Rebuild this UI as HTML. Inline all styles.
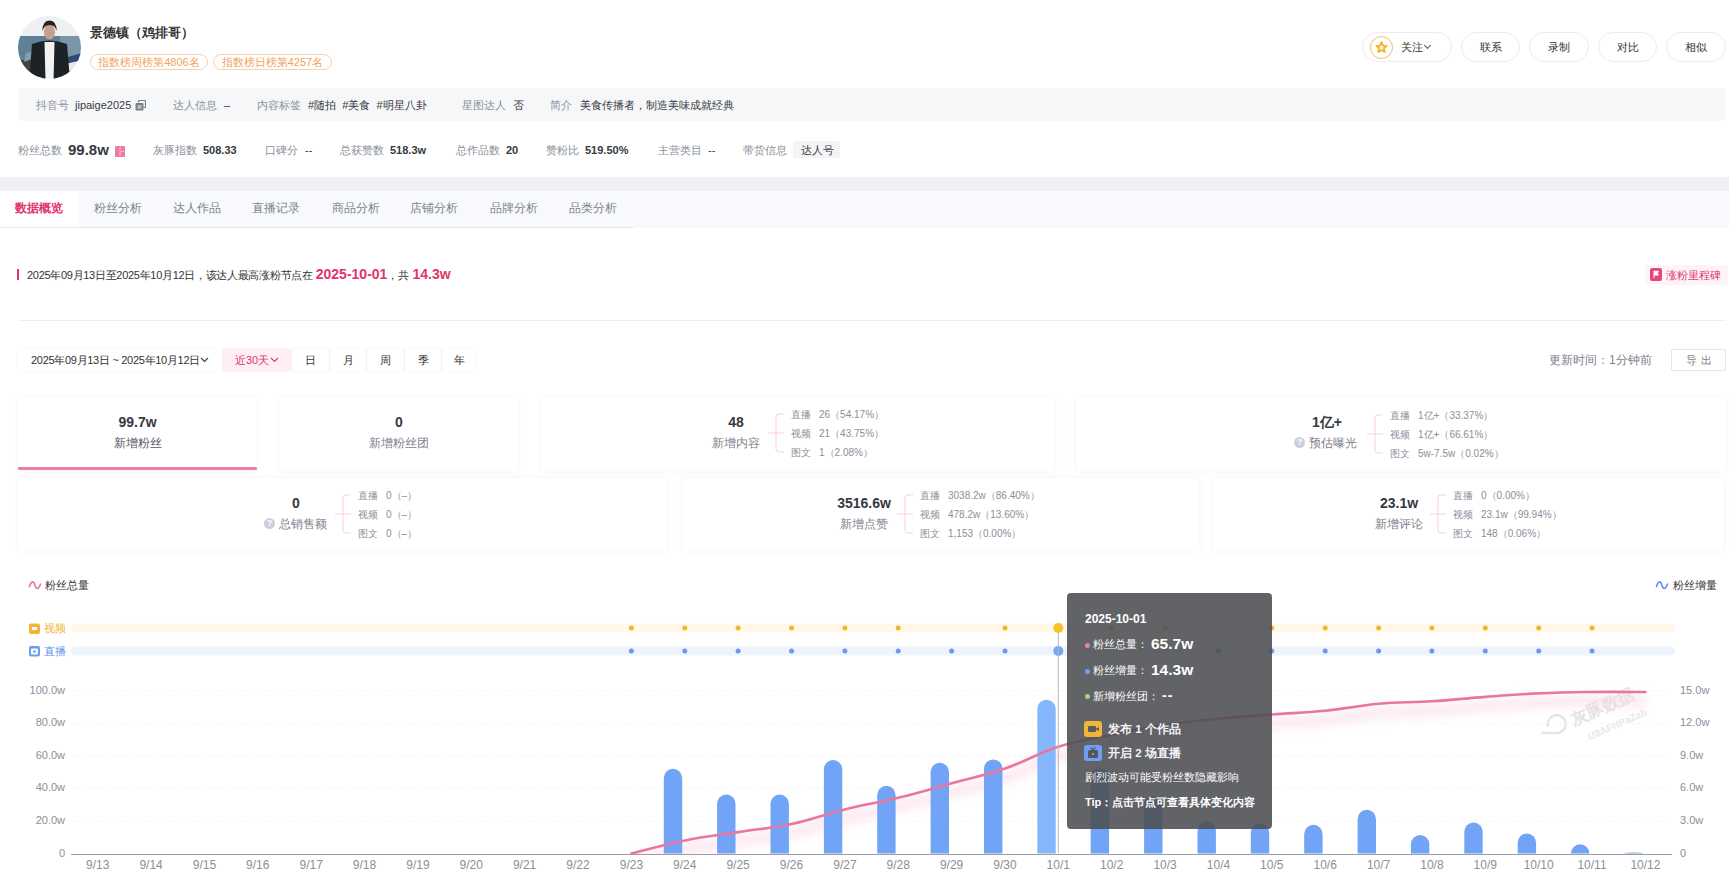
<!DOCTYPE html>
<html><head><meta charset="utf-8">
<style>
*{box-sizing:border-box;margin:0;padding:0}
html,body{width:1729px;height:881px;overflow:hidden;background:#fff}
body{font-family:"Liberation Sans",sans-serif;color:#333;font-size:11px;position:relative}
.a{position:absolute;white-space:nowrap}
.lbl{color:#8a8f99}
.val{color:#363940}
.btn{position:absolute;top:32px;height:30px;border:1px solid #ececec;border-radius:15px;font-size:11px;color:#333;text-align:center;line-height:28px;background:#fff}
.badge{position:absolute;top:54px;height:16px;border:1px solid #f5d3b0;border-radius:8px;color:#f0a35e;font-size:11px;line-height:14px;text-align:center}
.tab{position:absolute;top:200px;font-size:12px;color:#7d828c;line-height:16px}
.card{position:absolute;background:#fff;border-radius:4px;box-shadow:0 0 6px rgba(0,0,0,0.05)}
.big{position:absolute;font-size:14px;font-weight:bold;color:#363940;text-align:center;line-height:16px}
.sub{position:absolute;font-size:12px;color:#7d828c;text-align:center;line-height:16px}
.br{position:absolute;font-size:10px;color:#8a8f99;line-height:12px}
.seg{position:absolute;top:349px;height:22px;line-height:22px;font-size:11px;color:#333;text-align:center}
</style></head><body>

<!-- header -->
<svg class="a" style="left:18px;top:16px" width="63" height="63" viewBox="0 0 63 63">
<defs><clipPath id="av"><circle cx="31.5" cy="31.5" r="31.5"/></clipPath><filter id="avb"><feGaussianBlur stdDeviation="0.7"/></filter></defs>
<g clip-path="url(#av)"><g filter="url(#avb)">
<rect x="-2" y="-2" width="67" height="67" fill="#eef0f2"/>
<rect x="-2" y="20" width="67" height="26" fill="#5f8196"/>
<rect x="42" y="20" width="23" height="22" fill="#7896a8"/>
<rect x="-2" y="44" width="67" height="21" fill="#46403f"/>
<path d="M8 37 L22 33 L22 40 L6 46 Z" fill="#7fa0b3"/>
<path d="M46 45 L64 40 L64 65 L46 65 Z" fill="#b8525e"/>
<path d="M50 47 L64 44 L64 52 L51 55 Z" fill="#e9e9ec"/>
<path d="M46 42 L64 37 L64 44 L47 48 Z" fill="#2f4c78"/>
<path d="M11 65 L14 28 Q31 21 49 28 L52 65 Z" fill="#1e2326"/>
<path d="M26.5 26 L36.5 26 L35.5 65 L27.5 65 Z" fill="#f3f3f3"/>
<ellipse cx="31.5" cy="16" rx="5.6" ry="7.5" fill="#c6a08e"/>
<path d="M24.5 15 Q24 5 31.5 4.5 Q39 5 38.5 15 Q37.5 9 31.5 9 Q26 9 24.5 15 Z" fill="#2b211f"/>
</g></g></svg>
<div class="a" style="left:90px;top:25px;font-size:13px;font-weight:bold;color:#333;line-height:16px">景德镇（鸡排哥）</div>
<div class="badge" style="left:90px;width:118px">指数榜周榜第4806名</div>
<div class="badge" style="left:213px;width:119px">指数榜日榜第4257名</div>

<div class="btn" style="left:1362px;width:90px;text-align:left;padding-left:38px">关注<span style="display:inline-block;margin-left:2px;width:5px;height:5px;border-right:1px solid #555;border-bottom:1px solid #555;transform:rotate(45deg);position:relative;top:-3px"></span></div>
<div class="a" style="left:1370px;top:36px;width:23px;height:23px;border:1.6px solid #efc24a;border-radius:50%"></div>
<svg class="a" style="left:1374px;top:40px" width="15" height="15" viewBox="0 0 15 15"><path d="M7.5 2.2 L9 5.6 L12.6 5.9 L9.9 8.3 L10.7 11.9 L7.5 10 L4.3 11.9 L5.1 8.3 L2.4 5.9 L6 5.6 Z" fill="#fff6dc" stroke="#f0b62a" stroke-width="1.9" stroke-linejoin="round"/></svg>
<div class="btn" style="left:1461px;width:59px">联系</div>
<div class="btn" style="left:1529px;width:60px">录制</div>
<div class="btn" style="left:1598px;width:59px">对比</div>
<div class="btn" style="left:1666px;width:60px">相似</div>

<!-- info bar -->
<div class="a" style="left:18px;top:88px;width:1708px;height:33px;background:#f6f7f9;border-radius:4px"></div>
<div class="a lbl" style="left:36px;top:98px;line-height:14px">抖音号</div>
<div class="a val" style="left:75px;top:98px;line-height:14px">jipaige2025</div>
<svg class="a" style="left:135px;top:100px" width="11" height="11" viewBox="0 0 11 11"><path d="M3.5 2.5 V1.5 Q3.5 0.5 4.5 0.5 H9.5 Q10.5 0.5 10.5 1.5 V6.5 Q10.5 7.5 9.5 7.5 H8.5" fill="none" stroke="#7b7e86" stroke-width="1.2"/><rect x="0.5" y="3" width="8" height="7.5" rx="1" fill="#7b7e86"/><rect x="2.5" y="5.5" width="4" height="0.9" fill="#fff"/><rect x="2.5" y="7.5" width="4" height="0.9" fill="#fff"/></svg>
<div class="a lbl" style="left:173px;top:98px;line-height:14px">达人信息</div>
<div class="a val" style="left:224px;top:98px;line-height:14px">–</div>
<div class="a lbl" style="left:257px;top:98px;line-height:14px">内容标签</div>
<div class="a val" style="left:308px;top:98px;line-height:14px">#随拍 &nbsp;#美食 &nbsp;#明星八卦</div>
<div class="a lbl" style="left:462px;top:98px;line-height:14px">星图达人</div>
<div class="a val" style="left:513px;top:98px;line-height:14px">否</div>
<div class="a lbl" style="left:550px;top:98px;line-height:14px">简介</div>
<div class="a val" style="left:580px;top:98px;line-height:14px">美食传播者，制造美味成就经典</div>

<!-- stats -->
<div class="a lbl" style="left:18px;top:143px;line-height:14px">粉丝总数</div>
<div class="a val" style="left:68px;top:141px;font-size:15px;font-weight:bold;line-height:18px">99.8w</div>
<svg class="a" style="left:115px;top:146px" width="10" height="11" viewBox="0 0 10 11"><rect width="10" height="11" rx="1" fill="#ef7aa2"/><rect x="4.6" y="1" width="0.9" height="9" fill="#f9c5d7"/><rect x="6" y="5" width="3" height="0.9" fill="#f9c5d7"/></svg>
<div class="a lbl" style="left:153px;top:143px;line-height:14px">灰豚指数</div>
<div class="a val" style="left:203px;top:143px;font-weight:bold;line-height:14px">508.33</div>
<div class="a lbl" style="left:265px;top:143px;line-height:14px">口碑分</div>
<div class="a val" style="left:305px;top:143px;line-height:14px">--</div>
<div class="a lbl" style="left:340px;top:143px;line-height:14px">总获赞数</div>
<div class="a val" style="left:390px;top:143px;font-weight:bold;line-height:14px">518.3w</div>
<div class="a lbl" style="left:456px;top:143px;line-height:14px">总作品数</div>
<div class="a val" style="left:506px;top:143px;font-weight:bold;line-height:14px">20</div>
<div class="a lbl" style="left:546px;top:143px;line-height:14px">赞粉比</div>
<div class="a val" style="left:585px;top:143px;font-weight:bold;line-height:14px">519.50%</div>
<div class="a lbl" style="left:658px;top:143px;line-height:14px">主营类目</div>
<div class="a val" style="left:708px;top:143px;line-height:14px">--</div>
<div class="a lbl" style="left:743px;top:143px;line-height:14px">带货信息</div>
<div class="a" style="left:793px;top:141px;width:47px;height:17px;background:#f3f4f6;border-radius:2px"></div>
<div class="a val" style="left:801px;top:143px;line-height:14px">达人号</div>

<!-- grey band -->
<div class="a" style="left:0;top:177px;width:1729px;height:14px;background:#eef0f3"></div>

<!-- tabs -->
<div class="a" style="left:0;top:191px;width:1729px;height:37px;background:#f8f9fd"></div>
<div class="a" style="left:0;top:227px;width:634px;height:1px;background:#e6e8eb"></div>
<div class="a" style="left:0;top:191px;width:79px;height:36px;background:#fff"></div>
<div class="tab" style="left:15px;color:#e3346a;font-weight:bold">数据概览</div>
<div class="tab" style="left:94px">粉丝分析</div>
<div class="tab" style="left:173px">达人作品</div>
<div class="tab" style="left:252px">直播记录</div>
<div class="tab" style="left:332px">商品分析</div>
<div class="tab" style="left:410px">店铺分析</div>
<div class="tab" style="left:490px">品牌分析</div>
<div class="tab" style="left:569px">品类分析</div>

<!-- headline -->
<div class="a" style="left:17px;top:269px;width:2px;height:11px;background:#e3346a"></div>
<div class="a" style="left:27px;top:267px;font-size:11px;color:#333;line-height:14px"><span style="letter-spacing:-0.3px">2025年09月13日至2025年10月12日，该达人最高涨粉节点在</span> <span style="color:#e3346a;font-size:14px;font-weight:bold">2025-10-01</span>，共 <span style="color:#e3346a;font-size:14px;font-weight:bold">14.3w</span></div>
<div class="a" style="left:1645px;top:265px;width:83px;height:20px;background:#fef4f7;border-radius:2px"></div>
<svg class="a" style="left:1650px;top:268px" width="12" height="13" viewBox="0 0 12 13"><rect width="12" height="13" rx="2" fill="#e8457a"/><path d="M4 3 V10 M4 3.3 H8.5 L7.3 5.2 L8.5 7 H4" fill="#fff" stroke="#fff" stroke-width="1"/></svg>
<div class="a" style="left:1666px;top:267px;font-size:11px;color:#e3346a;line-height:16px">涨粉里程碑</div>
<div class="a" style="left:18px;top:320px;width:1708px;height:1px;background:#eceef1"></div>

<!-- filter row -->
<div class="a" style="left:18px;top:349px;width:458px;height:22px;box-shadow:0 0 3px rgba(0,0,0,0.06);background:#fff"></div>
<div class="a" style="left:31px;top:353px;font-size:11px;line-height:14px;color:#333;letter-spacing:-0.3px">2025年09月13日 ~ 2025年10月12日</div>
<svg class="a" style="left:200px;top:357px" width="9" height="6" viewBox="0 0 9 6"><path d="M1 1 L4.5 4.5 L8 1" fill="none" stroke="#444" stroke-width="1.1"/></svg>
<div class="seg" style="left:222px;width:70px;background:#fdeff3;color:#e3346a;padding-right:10px">近30天</div>
<svg class="a" style="left:270px;top:357px" width="9" height="6" viewBox="0 0 9 6"><path d="M1 1 L4.5 4.5 L8 1" fill="none" stroke="#e3346a" stroke-width="1.1"/></svg>
<div class="seg" style="left:292px;width:37px">日</div>
<div class="seg" style="left:329px;width:37px;border-left:1px solid #f0f1f3">月</div>
<div class="seg" style="left:366px;width:38px;border-left:1px solid #f0f1f3">周</div>
<div class="seg" style="left:404px;width:37px;border-left:1px solid #f0f1f3">季</div>
<div class="seg" style="left:441px;width:35px;border-left:1px solid #f0f1f3">年</div>
<div class="a" style="left:1549px;top:352px;font-size:12px;color:#7d828c;line-height:16px">更新时间：1分钟前</div>
<div class="a" style="left:1671px;top:349px;width:55px;height:22px;border:1px solid #e3e5e8;border-radius:2px;font-size:11px;color:#7d828c;line-height:20px;text-align:center;letter-spacing:4px;padding-left:4px">导出</div>


<!-- cards -->
<div class="card" style="left:18px;top:397px;width:239px;height:74px"></div>
<div class="a" style="left:18px;top:467px;width:239px;height:3px;background:#ec7fa4;border-radius:1px"></div>
<div class="big" style="left:18px;top:414px;width:239px">99.7w</div>
<div class="sub" style="left:18px;top:435px;width:239px;color:#555a64">新增粉丝</div>

<div class="card" style="left:279px;top:397px;width:239px;height:74px"></div>
<div class="big" style="left:279px;top:414px;width:240px">0</div>
<div class="sub" style="left:279px;top:435px;width:240px">新增粉丝团</div>

<div class="card" style="left:541px;top:397px;width:513px;height:74px"></div>
<div class="big" style="left:706px;top:414px;width:60px">48</div>
<div class="sub" style="left:706px;top:435px;width:60px">新增内容</div>
<svg class="a" style="left:768px;top:413px" width="18" height="40" viewBox="0 0 18 40"><path d="M16 1 H11 Q8 1 8 4 V36 Q8 39 11 39 H16 M0 20 H16" fill="none" stroke="#f7cfdb" stroke-width="1"/></svg>
<div class="br" style="left:791px;top:409px"><span style="display:inline-block;width:28px">直播</span>26（54.17%）</div>
<div class="br" style="left:791px;top:428px"><span style="display:inline-block;width:28px">视频</span>21（43.75%）</div>
<div class="br" style="left:791px;top:447px"><span style="display:inline-block;width:28px">图文</span>1（2.08%）</div>


<div class="card" style="left:1076px;top:397px;width:650px;height:74px"></div>
<div class="big" style="left:1297px;top:414px;width:60px">1亿+</div>
<div class="a" style="left:1294px;top:437px;width:11px;height:11px;border-radius:50%;background:#c9d0dc;color:#fff;font-size:9px;line-height:11px;text-align:center;font-weight:bold">?</div>
<div class="sub" style="left:1309px;top:435px;width:52px;text-align:left">预估曝光</div>
<svg class="a" style="left:1367px;top:414px" width="18" height="40" viewBox="0 0 18 40"><path d="M16 1 H11 Q8 1 8 4 V36 Q8 39 11 39 H16 M0 20 H16" fill="none" stroke="#f7cfdb" stroke-width="1"/></svg>
<div class="br" style="left:1390px;top:410px"><span style="display:inline-block;width:28px">直播</span>1亿+（33.37%）</div>
<div class="br" style="left:1390px;top:429px"><span style="display:inline-block;width:28px">视频</span>1亿+（66.61%）</div>
<div class="br" style="left:1390px;top:448px"><span style="display:inline-block;width:28px">图文</span>5w-7.5w（0.02%）</div>


<div class="card" style="left:18px;top:478px;width:648px;height:73px"></div>
<div class="big" style="left:266px;top:495px;width:60px">0</div>
<div class="a" style="left:264px;top:518px;width:11px;height:11px;border-radius:50%;background:#c9d0dc;color:#fff;font-size:9px;line-height:11px;text-align:center;font-weight:bold">?</div>
<div class="sub" style="left:279px;top:516px;width:52px;text-align:left">总销售额</div>
<svg class="a" style="left:335px;top:494px" width="18" height="40" viewBox="0 0 18 40"><path d="M16 1 H11 Q8 1 8 4 V36 Q8 39 11 39 H16 M0 20 H16" fill="none" stroke="#f7cfdb" stroke-width="1"/></svg>
<div class="br" style="left:358px;top:490px"><span style="display:inline-block;width:28px">直播</span>0（–）</div>
<div class="br" style="left:358px;top:509px"><span style="display:inline-block;width:28px">视频</span>0（–）</div>
<div class="br" style="left:358px;top:528px"><span style="display:inline-block;width:28px">图文</span>0（–）</div>


<div class="card" style="left:683px;top:478px;width:516px;height:73px"></div>
<div class="big" style="left:824px;top:495px;width:80px">3516.6w</div>
<div class="sub" style="left:824px;top:516px;width:80px">新增点赞</div>
<svg class="a" style="left:897px;top:494px" width="18" height="40" viewBox="0 0 18 40"><path d="M16 1 H11 Q8 1 8 4 V36 Q8 39 11 39 H16 M0 20 H16" fill="none" stroke="#f7cfdb" stroke-width="1"/></svg>
<div class="br" style="left:920px;top:490px"><span style="display:inline-block;width:28px">直播</span>3038.2w（86.40%）</div>
<div class="br" style="left:920px;top:509px"><span style="display:inline-block;width:28px">视频</span>478.2w（13.60%）</div>
<div class="br" style="left:920px;top:528px"><span style="display:inline-block;width:28px">图文</span>1,153（0.00%）</div>


<div class="card" style="left:1213px;top:478px;width:511px;height:73px"></div>
<div class="big" style="left:1359px;top:495px;width:80px">23.1w</div>
<div class="sub" style="left:1359px;top:516px;width:80px">新增评论</div>
<svg class="a" style="left:1430px;top:494px" width="18" height="40" viewBox="0 0 18 40"><path d="M16 1 H11 Q8 1 8 4 V36 Q8 39 11 39 H16 M0 20 H16" fill="none" stroke="#f7cfdb" stroke-width="1"/></svg>
<div class="br" style="left:1453px;top:490px"><span style="display:inline-block;width:28px">直播</span>0（0.00%）</div>
<div class="br" style="left:1453px;top:509px"><span style="display:inline-block;width:28px">视频</span>23.1w（99.94%）</div>
<div class="br" style="left:1453px;top:528px"><span style="display:inline-block;width:28px">图文</span>148（0.06%）</div>


<!-- watermark -->
<svg class="a" style="left:1500px;top:660px" width="200" height="110" viewBox="1500 660 200 110">
<g transform="translate(1573,727) rotate(-24)" fill="#e4e5e7">
<text x="1" y="-1" font-size="17" font-weight="bold" font-family="Liberation Sans" fill="#e3e4e6">灰豚数据</text>
<text x="10" y="19" font-size="10" font-weight="bold" font-family="Liberation Sans" fill="#e8e9eb">U8AFHPaZab</text>
</g>
<g transform="translate(1557,726) rotate(-24)" fill="none" stroke="#e3e4e6" stroke-width="2.3">
<path d="M-8.5 -3 A9 9 0 1 1 -4 6"/><path d="M-4 6 L-17 0"/>
</g>
</svg>
<!--CHART-->
<svg class="a" style="left:0;top:560px" width="1729" height="321" viewBox="0 560 1729 321">
<defs><clipPath id="pc"><rect x="71" y="600" width="1601" height="254"/></clipPath><filter id="glow" x="-5%" y="-50%" width="110%" height="200%"><feGaussianBlur stdDeviation="5"/></filter></defs>
<path d="M29.5 586.5 C31.5 580.5 33.5 580.5 35 585.5 C36.5 590 38.5 589.5 40.5 584" fill="none" stroke="#e8739b" stroke-width="1.6" stroke-linecap="round"/>
<path d="M1656.5 586.5 C1658.5 580.5 1660.5 580.5 1662 585.5 C1663.5 590 1665.5 589.5 1667.5 584" fill="none" stroke="#5b8ff9" stroke-width="1.6" stroke-linecap="round"/>
<rect x="71" y="623.5" width="1604" height="9" rx="4.5" fill="#fff7e8"/>
<rect x="71" y="646.5" width="1604" height="9" rx="4.5" fill="#eef3fc"/>
<rect x="29" y="623.5" width="11" height="10.5" rx="2" fill="#f2b53a"/><rect x="32" y="627" width="5" height="3" fill="#fff"/>
<rect x="29" y="646" width="11" height="10.5" rx="2" fill="#6a9cf0"/><rect x="31" y="648.5" width="7" height="6" rx="1" fill="#fff"/><circle cx="34.5" cy="651.5" r="1.3" fill="#6a9cf0"/>
<line x1="71" y1="690.8" x2="1672" y2="690.8" stroke="#f3f4f6" stroke-width="1" stroke-dasharray="3 3"/>
<line x1="71" y1="723.3" x2="1672" y2="723.3" stroke="#f3f4f6" stroke-width="1" stroke-dasharray="3 3"/>
<line x1="71" y1="755.9" x2="1672" y2="755.9" stroke="#f3f4f6" stroke-width="1" stroke-dasharray="3 3"/>
<line x1="71" y1="788.4" x2="1672" y2="788.4" stroke="#f3f4f6" stroke-width="1" stroke-dasharray="3 3"/>
<line x1="71" y1="821.0" x2="1672" y2="821.0" stroke="#f3f4f6" stroke-width="1" stroke-dasharray="3 3"/>
<line x1="71" y1="854.5" x2="1672" y2="854.5" stroke="#9a9da3" stroke-width="1"/>
<g clip-path="url(#pc)"><path d="M631.4 853.6 C642.1 851.0 663.4 844.8 684.8 840.5 C706.1 836.2 716.8 835.4 738.1 832.1 C759.5 828.8 770.1 828.5 791.5 824.0 C812.8 819.5 823.5 814.6 844.9 809.4 C866.2 804.2 876.9 803.0 898.2 797.8 C919.6 792.6 930.3 789.2 951.6 783.3 C973.0 777.4 983.6 775.8 1005.0 768.5 C1026.3 761.2 1037.0 753.6 1058.3 746.8 C1079.7 740.0 1090.4 739.1 1111.7 734.7 C1133.1 730.3 1143.7 727.9 1165.1 724.7 C1186.4 721.5 1197.1 720.7 1218.5 718.7 C1239.8 716.7 1250.5 716.1 1271.8 714.5 C1293.2 712.9 1303.8 712.9 1325.2 710.8 C1346.5 708.7 1357.2 705.7 1378.6 703.8 C1399.9 701.9 1410.6 702.7 1431.9 701.3 C1453.3 699.9 1464.0 698.5 1485.3 696.9 C1506.7 695.3 1517.3 694.4 1538.7 693.4 C1560.0 692.4 1570.7 692.3 1592.0 692.0 C1613.4 691.7 1634.7 692.0 1645.4 692.0" transform="translate(0,9)" fill="none" stroke="#fbd9e4" stroke-width="12" opacity="0.55" filter="url(#glow)"/></g>
<path d="M663.8 853.5 V777.9 A9.2 9.2 0 0 1 682.2 777.9 V853.5 Z" fill="#71a3f7"/>
<path d="M717.1 853.5 V803.8 A9.2 9.2 0 0 1 735.5 803.8 V853.5 Z" fill="#71a3f7"/>
<path d="M770.5 853.5 V803.8 A9.2 9.2 0 0 1 788.9 803.8 V853.5 Z" fill="#71a3f7"/>
<path d="M823.9 853.5 V769.2 A9.2 9.2 0 0 1 842.3 769.2 V853.5 Z" fill="#71a3f7"/>
<path d="M877.2 853.5 V794.9 A9.2 9.2 0 0 1 895.6 794.9 V853.5 Z" fill="#71a3f7"/>
<path d="M930.6 853.5 V772.0 A9.2 9.2 0 0 1 949.0 772.0 V853.5 Z" fill="#71a3f7"/>
<path d="M984.0 853.5 V768.6 A9.2 9.2 0 0 1 1002.4 768.6 V853.5 Z" fill="#71a3f7"/>
<path d="M1037.3 853.5 V708.8 A9.2 9.2 0 0 1 1055.7 708.8 V853.5 Z" fill="#86b6fb"/>
<path d="M1090.7 853.5 V777.2 A9.2 9.2 0 0 1 1109.1 777.2 V853.5 Z" fill="#71a3f7"/>
<path d="M1144.1 853.5 V805.2 A9.2 9.2 0 0 1 1162.5 805.2 V853.5 Z" fill="#71a3f7"/>
<path d="M1197.5 853.5 V830.7 A9.2 9.2 0 0 1 1215.9 830.7 V853.5 Z" fill="#71a3f7"/>
<path d="M1250.8 853.5 V832.4 A9.2 9.2 0 0 1 1269.2 832.4 V853.5 Z" fill="#71a3f7"/>
<path d="M1304.2 853.5 V834.0 A9.2 9.2 0 0 1 1322.6 834.0 V853.5 Z" fill="#71a3f7"/>
<path d="M1357.6 853.5 V819.0 A9.2 9.2 0 0 1 1376.0 819.0 V853.5 Z" fill="#71a3f7"/>
<path d="M1410.9 853.5 V844.2 A9.2 9.2 0 0 1 1429.3 844.2 V853.5 Z" fill="#71a3f7"/>
<path d="M1464.3 853.5 V831.7 A9.2 9.2 0 0 1 1482.7 831.7 V853.5 Z" fill="#71a3f7"/>
<path d="M1517.7 853.5 V842.7 A9.2 9.2 0 0 1 1536.1 842.7 V853.5 Z" fill="#71a3f7"/>
<path d="M1571.0 853.5 V853.4 A9.2 9.2 0 0 1 1589.4 853.4 V853.5 Z" fill="#71a3f7"/>
<path d="M1624.4 853.5 V853.5 A9.2 1.0 0 0 1 1642.8 853.5 V853.5 Z" fill="#71a3f7"/>
<path d="M631.4 853.6 C642.1 851.0 663.4 844.8 684.8 840.5 C706.1 836.2 716.8 835.4 738.1 832.1 C759.5 828.8 770.1 828.5 791.5 824.0 C812.8 819.5 823.5 814.6 844.9 809.4 C866.2 804.2 876.9 803.0 898.2 797.8 C919.6 792.6 930.3 789.2 951.6 783.3 C973.0 777.4 983.6 775.8 1005.0 768.5 C1026.3 761.2 1037.0 753.6 1058.3 746.8 C1079.7 740.0 1090.4 739.1 1111.7 734.7 C1133.1 730.3 1143.7 727.9 1165.1 724.7 C1186.4 721.5 1197.1 720.7 1218.5 718.7 C1239.8 716.7 1250.5 716.1 1271.8 714.5 C1293.2 712.9 1303.8 712.9 1325.2 710.8 C1346.5 708.7 1357.2 705.7 1378.6 703.8 C1399.9 701.9 1410.6 702.7 1431.9 701.3 C1453.3 699.9 1464.0 698.5 1485.3 696.9 C1506.7 695.3 1517.3 694.4 1538.7 693.4 C1560.0 692.4 1570.7 692.3 1592.0 692.0 C1613.4 691.7 1634.7 692.0 1645.4 692.0" fill="none" stroke="#e8779f" stroke-width="2.6" stroke-linecap="round"/>
<circle cx="631.4" cy="628" r="2.5" fill="#f3b72f"/>
<circle cx="684.8" cy="628" r="2.5" fill="#f3b72f"/>
<circle cx="738.1" cy="628" r="2.5" fill="#f3b72f"/>
<circle cx="791.5" cy="628" r="2.5" fill="#f3b72f"/>
<circle cx="844.9" cy="628" r="2.5" fill="#f3b72f"/>
<circle cx="898.2" cy="628" r="2.5" fill="#f3b72f"/>
<circle cx="1005.0" cy="628" r="2.5" fill="#f3b72f"/>
<circle cx="1058.3" cy="628" r="5" fill="#f5c22e"/>
<circle cx="1111.7" cy="628" r="2.5" fill="#f3b72f"/>
<circle cx="1165.1" cy="628" r="2.5" fill="#f3b72f"/>
<circle cx="1271.8" cy="628" r="2.5" fill="#f3b72f"/>
<circle cx="1325.2" cy="628" r="2.5" fill="#f3b72f"/>
<circle cx="1378.6" cy="628" r="2.5" fill="#f3b72f"/>
<circle cx="1431.9" cy="628" r="2.5" fill="#f3b72f"/>
<circle cx="1485.3" cy="628" r="2.5" fill="#f3b72f"/>
<circle cx="1538.7" cy="628" r="2.5" fill="#f3b72f"/>
<circle cx="1592.0" cy="628" r="2.5" fill="#f3b72f"/>
<circle cx="631.4" cy="651" r="2.5" fill="#6a9ae8"/>
<circle cx="684.8" cy="651" r="2.5" fill="#6a9ae8"/>
<circle cx="738.1" cy="651" r="2.5" fill="#6a9ae8"/>
<circle cx="791.5" cy="651" r="2.5" fill="#6a9ae8"/>
<circle cx="844.9" cy="651" r="2.5" fill="#6a9ae8"/>
<circle cx="898.2" cy="651" r="2.5" fill="#6a9ae8"/>
<circle cx="951.6" cy="651" r="2.5" fill="#6a9ae8"/>
<circle cx="1005.0" cy="651" r="2.5" fill="#6a9ae8"/>
<circle cx="1058.3" cy="651" r="5" fill="#76a6f5"/>
<circle cx="1218.5" cy="651" r="2.5" fill="#6a9ae8"/>
<circle cx="1271.8" cy="651" r="2.5" fill="#6a9ae8"/>
<circle cx="1325.2" cy="651" r="2.5" fill="#6a9ae8"/>
<circle cx="1378.6" cy="651" r="2.5" fill="#6a9ae8"/>
<circle cx="1431.9" cy="651" r="2.5" fill="#6a9ae8"/>
<circle cx="1485.3" cy="651" r="2.5" fill="#6a9ae8"/>
<circle cx="1538.7" cy="651" r="2.5" fill="#6a9ae8"/>
<circle cx="1592.0" cy="651" r="2.5" fill="#6a9ae8"/>
<line x1="1058.3" y1="633" x2="1058.3" y2="853" stroke="#b5b9c0" stroke-width="1"/>
<text x="65" y="856.5" text-anchor="end" font-size="11" fill="#8a8f99" font-family="Liberation Sans">0</text>
<text x="65" y="824.0" text-anchor="end" font-size="11" fill="#8a8f99" font-family="Liberation Sans">20.0w</text>
<text x="65" y="791.4" text-anchor="end" font-size="11" fill="#8a8f99" font-family="Liberation Sans">40.0w</text>
<text x="65" y="758.9" text-anchor="end" font-size="11" fill="#8a8f99" font-family="Liberation Sans">60.0w</text>
<text x="65" y="726.3" text-anchor="end" font-size="11" fill="#8a8f99" font-family="Liberation Sans">80.0w</text>
<text x="65" y="693.8" text-anchor="end" font-size="11" fill="#8a8f99" font-family="Liberation Sans">100.0w</text>
<text x="1680" y="856.5" font-size="11" fill="#8a8f99" font-family="Liberation Sans">0</text>
<text x="1680" y="824.0" font-size="11" fill="#8a8f99" font-family="Liberation Sans">3.0w</text>
<text x="1680" y="791.4" font-size="11" fill="#8a8f99" font-family="Liberation Sans">6.0w</text>
<text x="1680" y="758.9" font-size="11" fill="#8a8f99" font-family="Liberation Sans">9.0w</text>
<text x="1680" y="726.3" font-size="11" fill="#8a8f99" font-family="Liberation Sans">12.0w</text>
<text x="1680" y="693.8" font-size="11" fill="#8a8f99" font-family="Liberation Sans">15.0w</text>
<text x="97.7" y="869" text-anchor="middle" font-size="12" fill="#8a8f99" font-family="Liberation Sans">9/13</text>
<text x="151.1" y="869" text-anchor="middle" font-size="12" fill="#8a8f99" font-family="Liberation Sans">9/14</text>
<text x="204.4" y="869" text-anchor="middle" font-size="12" fill="#8a8f99" font-family="Liberation Sans">9/15</text>
<text x="257.8" y="869" text-anchor="middle" font-size="12" fill="#8a8f99" font-family="Liberation Sans">9/16</text>
<text x="311.2" y="869" text-anchor="middle" font-size="12" fill="#8a8f99" font-family="Liberation Sans">9/17</text>
<text x="364.5" y="869" text-anchor="middle" font-size="12" fill="#8a8f99" font-family="Liberation Sans">9/18</text>
<text x="417.9" y="869" text-anchor="middle" font-size="12" fill="#8a8f99" font-family="Liberation Sans">9/19</text>
<text x="471.3" y="869" text-anchor="middle" font-size="12" fill="#8a8f99" font-family="Liberation Sans">9/20</text>
<text x="524.6" y="869" text-anchor="middle" font-size="12" fill="#8a8f99" font-family="Liberation Sans">9/21</text>
<text x="578.0" y="869" text-anchor="middle" font-size="12" fill="#8a8f99" font-family="Liberation Sans">9/22</text>
<text x="631.4" y="869" text-anchor="middle" font-size="12" fill="#8a8f99" font-family="Liberation Sans">9/23</text>
<text x="684.8" y="869" text-anchor="middle" font-size="12" fill="#8a8f99" font-family="Liberation Sans">9/24</text>
<text x="738.1" y="869" text-anchor="middle" font-size="12" fill="#8a8f99" font-family="Liberation Sans">9/25</text>
<text x="791.5" y="869" text-anchor="middle" font-size="12" fill="#8a8f99" font-family="Liberation Sans">9/26</text>
<text x="844.9" y="869" text-anchor="middle" font-size="12" fill="#8a8f99" font-family="Liberation Sans">9/27</text>
<text x="898.2" y="869" text-anchor="middle" font-size="12" fill="#8a8f99" font-family="Liberation Sans">9/28</text>
<text x="951.6" y="869" text-anchor="middle" font-size="12" fill="#8a8f99" font-family="Liberation Sans">9/29</text>
<text x="1005.0" y="869" text-anchor="middle" font-size="12" fill="#8a8f99" font-family="Liberation Sans">9/30</text>
<text x="1058.3" y="869" text-anchor="middle" font-size="12" fill="#8a8f99" font-family="Liberation Sans">10/1</text>
<text x="1111.7" y="869" text-anchor="middle" font-size="12" fill="#8a8f99" font-family="Liberation Sans">10/2</text>
<text x="1165.1" y="869" text-anchor="middle" font-size="12" fill="#8a8f99" font-family="Liberation Sans">10/3</text>
<text x="1218.5" y="869" text-anchor="middle" font-size="12" fill="#8a8f99" font-family="Liberation Sans">10/4</text>
<text x="1271.8" y="869" text-anchor="middle" font-size="12" fill="#8a8f99" font-family="Liberation Sans">10/5</text>
<text x="1325.2" y="869" text-anchor="middle" font-size="12" fill="#8a8f99" font-family="Liberation Sans">10/6</text>
<text x="1378.6" y="869" text-anchor="middle" font-size="12" fill="#8a8f99" font-family="Liberation Sans">10/7</text>
<text x="1431.9" y="869" text-anchor="middle" font-size="12" fill="#8a8f99" font-family="Liberation Sans">10/8</text>
<text x="1485.3" y="869" text-anchor="middle" font-size="12" fill="#8a8f99" font-family="Liberation Sans">10/9</text>
<text x="1538.7" y="869" text-anchor="middle" font-size="12" fill="#8a8f99" font-family="Liberation Sans">10/10</text>
<text x="1592.0" y="869" text-anchor="middle" font-size="12" fill="#8a8f99" font-family="Liberation Sans">10/11</text>
<text x="1645.4" y="869" text-anchor="middle" font-size="12" fill="#8a8f99" font-family="Liberation Sans">10/12</text>
</svg>
<!--/CHART-->

<!-- chart legends -->
<div class="a" style="left:45px;top:578px;font-size:11px;color:#333;line-height:14px">粉丝总量</div>
<div class="a" style="left:1673px;top:578px;font-size:11px;color:#333;line-height:14px">粉丝增量</div>
<div class="a" style="left:44px;top:621px;font-size:11px;color:#f2b53a;line-height:14px">视频</div>
<div class="a" style="left:44px;top:644px;font-size:11px;color:#5a8ef0;line-height:14px">直播</div>

<!-- tooltip -->
<div class="a" style="left:1067px;top:593px;width:205px;height:236px;background:rgba(76,77,82,0.88);border-radius:4px"></div>
<div class="a" style="left:1085px;top:612px;font-size:12px;font-weight:bold;color:#fff;line-height:15px">2025-10-01</div>
<div class="a" style="left:1085px;top:643px;width:5px;height:5px;border-radius:50%;background:#ec7fa4"></div>
<div class="a" style="left:1093px;top:637px;font-size:11px;color:#fff;line-height:14px">粉丝总量：</div>
<div class="a" style="left:1151px;top:635px;font-size:15.5px;font-weight:bold;color:#fff;line-height:18px">65.7w</div>
<div class="a" style="left:1085px;top:669px;width:5px;height:5px;border-radius:50%;background:#6ea0f5"></div>
<div class="a" style="left:1093px;top:663px;font-size:11px;color:#fff;line-height:14px">粉丝增量：</div>
<div class="a" style="left:1151px;top:661px;font-size:15.5px;font-weight:bold;color:#fff;line-height:18px">14.3w</div>
<div class="a" style="left:1085px;top:694px;width:5px;height:5px;border-radius:50%;background:#a4d38c"></div>
<div class="a" style="left:1093px;top:689px;font-size:11px;color:#fff;line-height:14px">新增粉丝团：</div>
<div class="a" style="left:1162px;top:687px;font-size:14px;font-weight:bold;color:#fff;line-height:16px;letter-spacing:1px">--</div>
<div class="a" style="left:1084px;top:721px;width:18px;height:16px;border-radius:3px;background:#f2b53a"></div>
<div class="a" style="left:1088px;top:726px;width:8px;height:6px;background:#5a5b60;border-radius:1px"></div>
<div class="a" style="left:1095px;top:727px;width:0;height:0;border-top:2px solid transparent;border-bottom:2px solid transparent;border-right:4px solid #5a5b60"></div>
<div class="a" style="left:1108px;top:722px;font-size:11.5px;font-weight:bold;color:#f4f4f5;line-height:14px">发布 1 个作品</div>
<div class="a" style="left:1084px;top:745px;width:18px;height:16px;border-radius:3px;background:#6e9ff5"></div>
<svg class="a" style="left:1084px;top:745px" width="18" height="16" viewBox="0 0 18 16"><path d="M6.5 2.5 L9 5 L11.5 2.5" fill="none" stroke="#55565b" stroke-width="1.2"/><rect x="4" y="5" width="10" height="8" rx="1.5" fill="#55565b"/><circle cx="9" cy="9" r="1" fill="#8ab0f5"/></svg>
<div class="a" style="left:1108px;top:746px;font-size:11.5px;font-weight:bold;color:#f4f4f5;line-height:14px">开启 2 场直播</div>
<div class="a" style="left:1085px;top:770px;font-size:11px;color:#fff;line-height:14px">剧烈波动可能受粉丝数隐藏影响</div>
<div class="a" style="left:1085px;top:795px;font-size:11px;font-weight:bold;color:#fff;line-height:14px">Tip：点击节点可查看具体变化内容</div>

</body></html>
